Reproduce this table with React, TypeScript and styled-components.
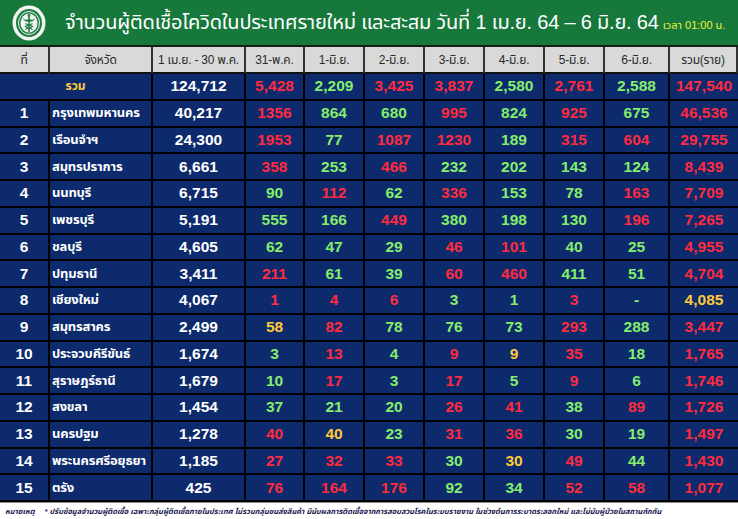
import React from 'react';
import styled, { createGlobalStyle } from 'styled-components';

type Tone = 'w' | 'r' | 'g' | 'y';

interface Row {
    no: string;
    name: string;
    base: string;
    days: [string, Tone][];
    total: [string, Tone];
}

const GlobalStyle = createGlobalStyle`
    html, body {
        margin: 0;
        padding: 0;
        background: #ffffff;
    }
    body {
        font-family: "Liberation Sans", "Noto Sans Thai", "Noto Sans", sans-serif;
    }
`;

const toneColor: Record<Tone, string> = {
    w: '#ffffff',
    r: '#ff2b3f',
    g: '#86ec6c',
    y: '#ffc93a',
};

const Page = styled.div`
    width: 738px;
    height: 519px;
    overflow: hidden;
    display: flex;
    flex-direction: column;
`;

const Banner = styled.div`
    height: 45px;
    background: #17783b;
    display: flex;
    align-items: center;
    padding-left: 12px;
    gap: 19px;
    flex-shrink: 0;
`;

const Title = styled.h1`
    margin: 0;
    color: #ffffff;
    font-size: 20px;
    font-weight: normal;
    white-space: nowrap;
    letter-spacing: -0.2px;
`;

const TimeNote = styled.span`
    color: #f2ef3a;
    font-size: 11px;
    letter-spacing: 0;
    margin-left: 4px;
`;

const Grid = styled.div`
    display: grid;
    grid-template-columns: 50px 103px 93px 59px 60px 60px 60px 60px 60px 65px 68px;
    grid-template-rows: 27px;
    grid-auto-rows: 26.75px;
    border-top: 2px solid #1c1c1c;
`;

const HeadCell = styled.div`
    background: #d9d9d9;
    color: #2b2b2b;
    font-size: 12px;
    letter-spacing: -0.2px;
    white-space: nowrap;
    display: flex;
    align-items: center;
    justify-content: center;
    border-right: 2px solid #333;
    border-bottom: 2px solid #111;
    box-sizing: border-box;
    &:last-child {
        border-right: none;
    }
`;

const Cell = styled.div<{ $tone?: Tone; $left?: boolean; $span?: number; $small?: boolean }>`
    background: #0c2a6c;
    color: ${(p) => toneColor[p.$tone || 'w']};
    font-size: ${(p) => (p.$left ? '13px' : p.$small ? '12px' : '15.5px')};
    letter-spacing: ${(p) => (p.$left ? '-0.2px' : '0')};
    font-weight: bold;
    display: flex;
    align-items: center;
    justify-content: ${(p) => (p.$left ? 'flex-start' : 'center')};
    padding-left: ${(p) => (p.$left ? '2px' : '0')};
    grid-column: ${(p) => (p.$span ? `span ${p.$span}` : 'auto')};
    border-right: 2px solid #000;
    border-bottom: 2px solid #000;
    box-sizing: border-box;
    white-space: nowrap;
    overflow: hidden;
`;

const LastCell = styled(Cell)`
    border-right: none;
`;

const Footer = styled.div`
    flex: 1;
    display: flex;
    align-items: center;
    padding-left: 5px;
    font-size: 7.5px;
    font-style: italic;
    font-weight: bold;
    color: #1a2150;
    white-space: nowrap;
    overflow: hidden;
    border-top: 1px solid #888;
`;

const FooterLabel = styled.span`
    margin-right: 10px;
`;

const heads = ['ที่', 'จังหวัด', '1 เม.ย. - 30 พ.ค.', '31-พ.ค.', '1-มิ.ย.', '2-มิ.ย.', '3-มิ.ย.', '4-มิ.ย.', '5-มิ.ย.', '6-มิ.ย.', 'รวม(ราย)'];

const t = (s: string): [string, Tone][] =>
    s.split(' ').map((v) => [v.slice(0, -2), v.slice(-1) as Tone]);

const mk = (no: string, name: string, base: string, days: string, total: string): Row => {
    const parts = t(days + ' ' + total);
    return { no, name, base, days: parts.slice(0, 7), total: parts[7] };
};

const totalRow = mk('', 'รวม', '124,712', '5,428:r 2,209:g 3,425:r 3,837:r 2,580:g 2,761:r 2,588:g', '147,540:r');

const rows: Row[] = [
    mk('1', 'กรุงเทพมหานคร', '40,217', '1356:r 864:g 680:g 995:r 824:g 925:r 675:g', '46,536:r'),
    mk('2', 'เรือนจำฯ', '24,300', '1953:r 77:g 1087:r 1230:r 189:g 315:r 604:r', '29,755:r'),
    mk('3', 'สมุทรปราการ', '6,661', '358:r 253:g 466:r 232:g 202:g 143:g 124:g', '8,439:r'),
    mk('4', 'นนทบุรี', '6,715', '90:g 112:r 62:g 336:r 153:g 78:g 163:r', '7,709:r'),
    mk('5', 'เพชรบุรี', '5,191', '555:g 166:g 449:r 380:g 198:g 130:g 196:r', '7,265:r'),
    mk('6', 'ชลบุรี', '4,605', '62:g 47:g 29:g 46:r 101:r 40:g 25:g', '4,955:r'),
    mk('7', 'ปทุมธานี', '3,411', '211:r 61:g 39:g 60:r 460:r 411:g 51:g', '4,704:r'),
    mk('8', 'เชียงใหม่', '4,067', '1:r 4:r 6:r 3:g 1:g 3:r -:g', '4,085:y'),
    mk('9', 'สมุทรสาคร', '2,499', '58:y 82:r 78:g 76:g 73:g 293:r 288:g', '3,447:r'),
    mk('10', 'ประจวบคีรีขันธ์', '1,674', '3:g 13:r 4:g 9:r 9:y 35:r 18:g', '1,765:r'),
    mk('11', 'สุราษฎร์ธานี', '1,679', '10:g 17:r 3:g 17:r 5:g 9:r 6:g', '1,746:r'),
    mk('12', 'สงขลา', '1,454', '37:g 21:g 20:g 26:r 41:r 38:g 89:r', '1,726:r'),
    mk('13', 'นครปฐม', '1,278', '40:r 40:y 23:g 31:r 36:r 30:g 19:g', '1,497:r'),
    mk('14', 'พระนครศรีอยุธยา', '1,185', '27:r 32:r 33:r 30:g 30:y 49:r 44:g', '1,430:r'),
    mk('15', 'ตรัง', '425', '76:r 164:r 176:r 92:g 34:g 52:r 58:r', '1,077:r'),
];

const Logo: React.FC = () => (
    <svg width="34" height="36" viewBox="0 0 34 36">
        <ellipse cx="17" cy="18" rx="16.5" ry="17.5" fill="#f4f4f4" />
        <ellipse cx="17" cy="18" rx="13" ry="14" fill="#1e7f43" />
        <ellipse cx="17" cy="18" rx="10.5" ry="11.5" fill="none" stroke="#e8f2ea" strokeWidth="1" />
        <ellipse cx="17" cy="18" rx="8.5" ry="9.5" fill="#f4f4f4" />
        <path d="M17 9.5 V27" stroke="#1e7f43" strokeWidth="1.6" />
        <path d="M10.5 12.5 C12.5 15.5 15 15 17 14 C19 15 21.5 15.5 23.5 12.5 C22 16.5 19.5 17 17 16.5 C14.5 17 12 16.5 10.5 12.5 Z" fill="#1e7f43" />
        <path d="M13.5 18.5 C15.5 20 18.5 20 20.5 21.5 C18.5 23 15.5 23 13.5 24.5" fill="none" stroke="#1e7f43" strokeWidth="1.3" />
        <path d="M20.5 18.5 C18.5 20 15.5 20 13.5 21.5 C15.5 23 18.5 23 20.5 24.5" fill="none" stroke="#1e7f43" strokeWidth="1.3" />
        <circle cx="17" cy="10.5" r="1.4" fill="#1e7f43" />
    </svg>
);

const App: React.FC = () => {
    const renderRow = (r: Row, key: string, isTotal?: boolean) => (
        <React.Fragment key={key}>
            {isTotal ? (
                <Cell $span={2} $tone="y" $small>{r.name}</Cell>
            ) : (
                <>
                    <Cell>{r.no}</Cell>
                    <Cell $left>{r.name}</Cell>
                </>
            )}
            <Cell>{r.base}</Cell>
            {r.days.map(([v, tone], i) => (
                <Cell key={i} $tone={tone}>{v}</Cell>
            ))}
            <LastCell $tone={r.total[1]}>{r.total[0]}</LastCell>
        </React.Fragment>
    );

    return (
        <>
            <GlobalStyle />
            <Page>
                <Banner>
                    <Logo />
                    <Title>
                        จำนวนผู้ติดเชื้อโควิดในประเทศรายใหม่ และสะสม วันที่ 1 เม.ย. 64 – 6 มิ.ย. 64
                        <TimeNote>เวลา 01:00 น.</TimeNote>
                    </Title>
                </Banner>
                <Grid>
                    {heads.map((h) => (
                        <HeadCell key={h}>{h}</HeadCell>
                    ))}
                    {renderRow(totalRow, 'total', true)}
                    {rows.map((r) => renderRow(r, r.no))}
                </Grid>
                <Footer>
                    <FooterLabel>หมายเหตุ</FooterLabel>
                    * ปรับข้อมูลจำนวนผู้ติดเชื้อ เฉพาะกลุ่มผู้ติดเชื้อภายในประเทศ ไม่รวมกลุ่มขนส่งสินค้า มีนับผลการติดเชื้อจากการสอบสวนโรคในระบบรายงาน ในช่วงต้นการระบาดระลอกใหม่ และไม่นับผู้ป่วยในสถานกักกัน
                </Footer>
            </Page>
        </>
    );
};

export default App;
